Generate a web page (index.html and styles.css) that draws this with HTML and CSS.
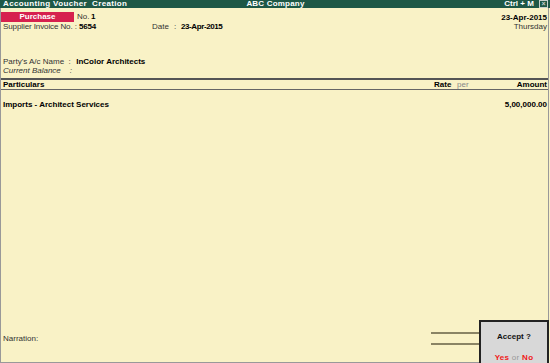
FILE: index.html
```html
<!DOCTYPE html>
<html lang="en">
<head>
  <meta charset="UTF-8">
  <title>Accounting Voucher Creation</title>
  <link rel="stylesheet" href="styles.css">
</head>
<body>
  <div class="titlebar">
    <span class="tb-left">Accounting Voucher&nbsp; Creation</span>
    <span class="tb-center">ABC Company</span>
    <span class="tb-right">Ctrl + M <span class="close-box">&#215;</span></span>
  </div>

  <div class="main">
    <div class="head">
      <div class="head-left">
        <div class="row line">
          <span class="vtype">Purchase</span>
          <span class="lbl no-lbl">No.</span>
          <strong>1</strong>
        </div>
        <div class="row line">
          <span class="lbl inv-lbl">Supplier Invoice No. :</span>
          <strong class="inv-no">5654</strong>
          <span class="lbl date-lbl">Date</span>
          <span class="lbl colon">:</span>
          <strong class="date-val">23-Apr-2015</strong>
        </div>
      </div>
      <div class="head-right">
        <div class="row"><strong>23-Apr-2015</strong></div>
        <div class="row">Thursday</div>
      </div>
    </div>

    <div class="party">
      <div class="row">
        <span class="lbl party-lbl">Party's A/c Name&nbsp; :</span>
        <strong>InColor Architects</strong>
      </div>
      <div class="row">
        <em class="lbl party-lbl">Current Balance&nbsp;&nbsp;&nbsp; :</em>
      </div>
    </div>

    <div class="cols">
      <span class="col-part">Particulars</span>
      <span class="col-rate">Rate</span>
      <span class="col-per">per</span>
      <span class="col-amt">Amount</span>
    </div>

    <div class="item">
      <strong class="col-part">Imports - Architect Services</strong>
      <strong class="col-amt">5,00,000.00</strong>
    </div>

    <div class="spacer"></div>

    <div class="footer">
      <div class="narration">Narration:</div>
      <div class="rules"></div>
      <div class="accept">
        <div class="accept-q">Accept ?</div>
        <div class="accept-a"><span class="red">Yes</span> <span class="or">or</span> <span class="red">No</span></div>
      </div>
    </div>
  </div>
</body>
</html>
```

FILE: styles.css
```css
html, body {
  margin: 0;
  padding: 0;
}
body {
  width: 550px;
  height: 363px;
  display: flex;
  flex-direction: column;
  font-family: 'Liberation Sans', Arial, sans-serif;
  font-size: 8px;
  color: #333;
  background: #f9f2c6;
  overflow: hidden;
}
strong {
  color: #000;
}
.titlebar {
  height: 8px;
  line-height: 8px;
  background: #1e5846;
  color: #fff;
  font-weight: bold;
  display: flex;
  justify-content: space-between;
  padding: 0 2px 0 3px;
}
.tb-left {
  flex: 1;
  letter-spacing: 0.35px;
}
.tb-center {
  flex: 1;
  text-align: center;
  letter-spacing: 0.2px;
}
.tb-right {
  flex: 1;
  text-align: right;
}
.close-box {
  display: inline-block;
  width: 7px;
  height: 6px;
  line-height: 6px;
  margin-left: 3px;
  border: 1px solid #c8d0cc;
  color: #c8d0cc;
  font-size: 7px;
  text-align: center;
  vertical-align: top;
}
.main {
  flex: 1;
  display: flex;
  flex-direction: column;
  border-left: 1px solid #999;
  border-right: 1px solid #999;
  border-bottom: 1px solid #999;
  margin-right: 1px;
}
.row {
  height: 9px;
  line-height: 9px;
  white-space: nowrap;
}
.line {
  display: flex;
}
.head {
  display: flex;
  justify-content: space-between;
  padding-top: 4px;
}
.head-left .row:first-child {
  height: 10px;
  line-height: 10px;
}
.head-right {
  text-align: right;
  padding-top: 1px;
  padding-right: 1px;
}
.vtype {
  width: 73px;
  height: 10px;
  background: #d6204e;
  color: #fff;
  font-weight: bold;
  text-align: center;
  margin-right: 3px;
}
.no-lbl {
  width: 14px;
}
.inv-lbl {
  width: 76px;
  padding-left: 2px;
  letter-spacing: -0.1px;
}
.inv-no {
  width: 73px;
  letter-spacing: -0.2px;
}
.date-lbl {
  width: 22px;
}
.colon {
  width: 7px;
}
.date-val {
  letter-spacing: -0.4px;
}
.party {
  margin-top: 26px;
  padding-left: 2px;
}
.party-lbl {
  display: inline-block;
  width: 71px;
}
.cols {
  display: flex;
  align-items: center;
  height: 9px;
  margin-top: 3px;
  border-top: 2px solid #555;
  border-bottom: 1px solid #666;
  font-weight: bold;
  color: #000;
}
.item {
  display: flex;
  height: 9px;
  line-height: 9px;
  margin-top: 10px;
}
.col-part {
  flex: 1;
  padding-left: 2px;
}
.col-rate {
  width: 23px;
}
.col-per {
  width: 30px;
  font-weight: normal;
  color: #888;
}
.col-amt {
  width: 60px;
  text-align: right;
  padding-right: 1px;
}
.spacer {
  flex: 1;
}
.footer {
  display: flex;
  align-items: flex-start;
  height: 43px;
  margin-bottom: -1px;
}
.narration {
  flex: 1;
  padding-left: 2px;
  margin-top: 14px;
}
.rules {
  width: 48px;
  height: 9px;
  margin-top: 12px;
  border-top: 2px solid #8a8464;
  border-bottom: 2px solid #8a8464;
}
.accept {
  width: 66px;
  height: 41px;
  background: #d8d8d8;
  border: 2px solid #222;
  border-bottom: none;
  margin-right: -1px;
  text-align: center;
}
.accept-q {
  margin-top: 10px;
  font-weight: bold;
  color: #111;
}
.accept-a {
  margin-top: 12px;
  font-weight: bold;
  letter-spacing: 0.3px;
}
.red {
  color: #f01818;
}
.or {
  color: #999;
  font-weight: normal;
}
```
